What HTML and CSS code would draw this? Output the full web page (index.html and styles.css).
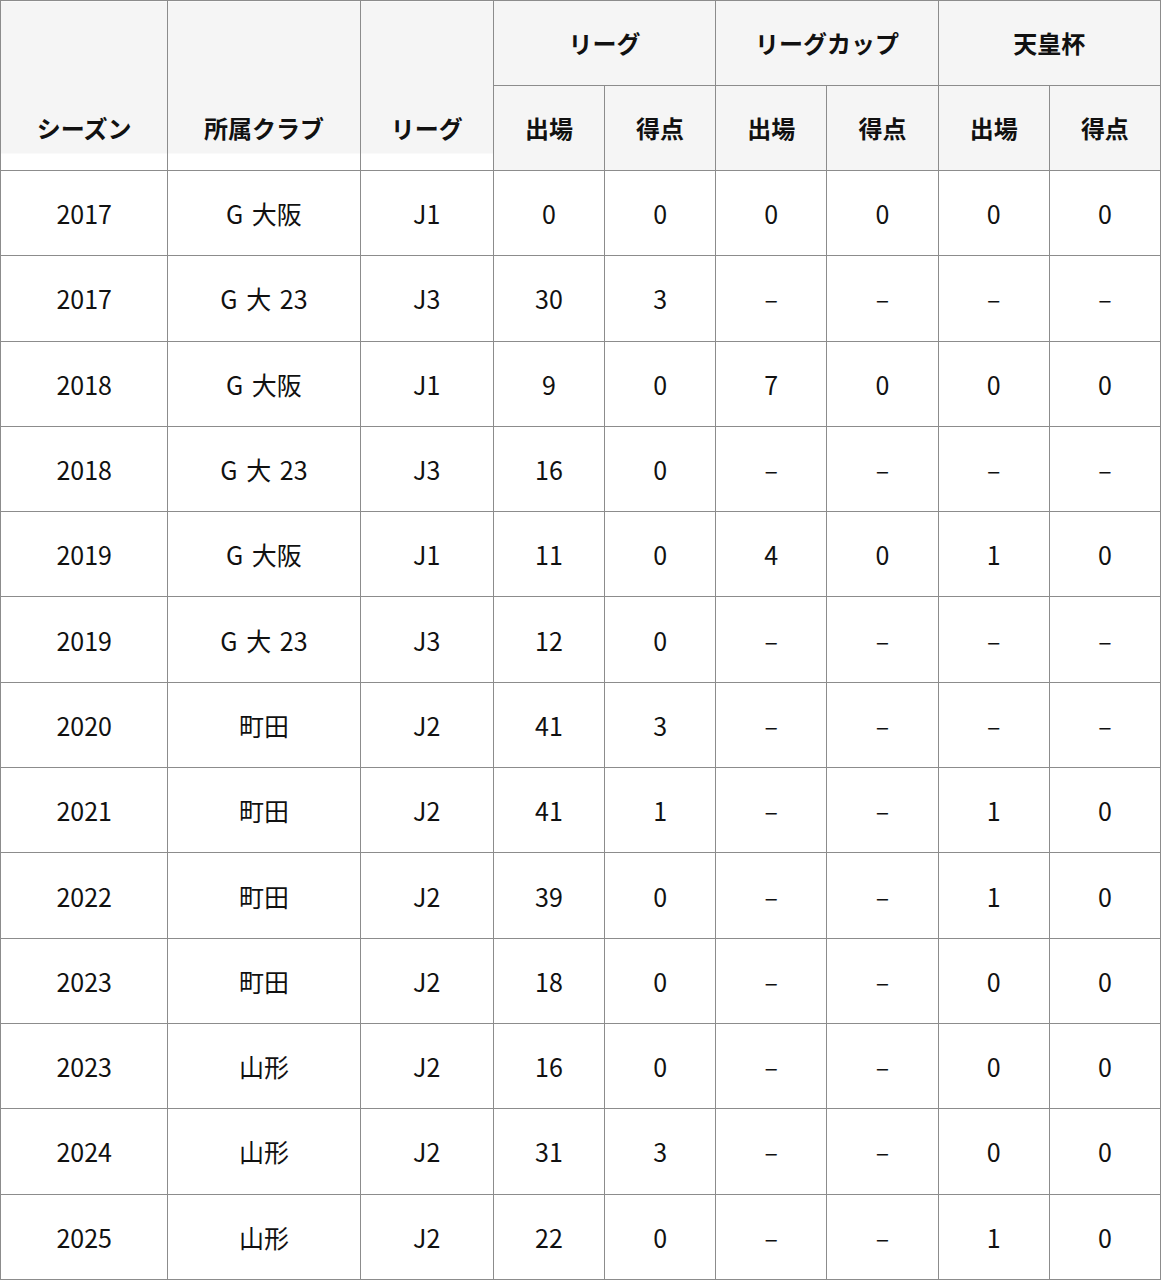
FILE: index.html
```html
<!DOCTYPE html>
<html lang="ja">
<head>
<meta charset="utf-8">
<link rel="stylesheet" href="styles.css">
</head>
<body>
<table class="stats">
<colgroup>
<col class="c-season"><col class="c-club"><col class="c-league">
<col class="c-n"><col class="c-n"><col class="c-n"><col class="c-n"><col class="c-n"><col class="c-n">
</colgroup>
<thead>
<tr class="h1">
<th rowspan="2" class="tall">シーズン</th>
<th rowspan="2" class="tall">所属クラブ</th>
<th rowspan="2" class="tall">リーグ</th>
<th colspan="2">リーグ</th>
<th colspan="2">リーグカップ</th>
<th colspan="2">天皇杯</th>
</tr>
<tr class="h2">
<th>出場</th><th>得点</th><th>出場</th><th>得点</th><th>出場</th><th>得点</th>
</tr>
</thead>
<tbody>
<tr><td>2017</td><td>G 大阪</td><td>J1</td><td>0</td><td>0</td><td>0</td><td>0</td><td>0</td><td>0</td></tr>
<tr><td>2017</td><td>G 大 23</td><td>J3</td><td>30</td><td>3</td><td>–</td><td>–</td><td>–</td><td>–</td></tr>
<tr><td>2018</td><td>G 大阪</td><td>J1</td><td>9</td><td>0</td><td>7</td><td>0</td><td>0</td><td>0</td></tr>
<tr><td>2018</td><td>G 大 23</td><td>J3</td><td>16</td><td>0</td><td>–</td><td>–</td><td>–</td><td>–</td></tr>
<tr><td>2019</td><td>G 大阪</td><td>J1</td><td>11</td><td>0</td><td>4</td><td>0</td><td>1</td><td>0</td></tr>
<tr><td>2019</td><td>G 大 23</td><td>J3</td><td>12</td><td>0</td><td>–</td><td>–</td><td>–</td><td>–</td></tr>
<tr><td>2020</td><td>町田</td><td>J2</td><td>41</td><td>3</td><td>–</td><td>–</td><td>–</td><td>–</td></tr>
<tr><td>2021</td><td>町田</td><td>J2</td><td>41</td><td>1</td><td>–</td><td>–</td><td>1</td><td>0</td></tr>
<tr><td>2022</td><td>町田</td><td>J2</td><td>39</td><td>0</td><td>–</td><td>–</td><td>1</td><td>0</td></tr>
<tr><td>2023</td><td>町田</td><td>J2</td><td>18</td><td>0</td><td>–</td><td>–</td><td>0</td><td>0</td></tr>
<tr><td>2023</td><td>山形</td><td>J2</td><td>16</td><td>0</td><td>–</td><td>–</td><td>0</td><td>0</td></tr>
<tr><td>2024</td><td>山形</td><td>J2</td><td>31</td><td>3</td><td>–</td><td>–</td><td>0</td><td>0</td></tr>
<tr><td>2025</td><td>山形</td><td>J2</td><td>22</td><td>0</td><td>–</td><td>–</td><td>1</td><td>0</td></tr>
</tbody>
</table>
</body>
</html>
```
FILE: styles.css
```css
html, body {
  margin: 0;
  padding: 0;
  background: #fff;
}
.stats {
  width: 1161px;
  height: 1280px;
  border-collapse: collapse;
  table-layout: fixed;
  font-family: "Noto Sans CJK JP", "Liberation Sans", sans-serif;
  color: #111;
}
.c-season { width: 167px; }
.c-club { width: 192px; }
.c-league { width: 133px; }
.c-n { width: 111px; }
.stats th,
.stats td {
  border: 1px solid #8c8c8c;
  text-align: center;
  vertical-align: middle;
  padding: 0;
  height: 84px;
  line-height: 30px;
}
.stats th {
  background: #f5f5f5;
  font-weight: 700;
  font-size: 24px;
}
.stats th.tall {
  vertical-align: bottom;
  padding-bottom: 27px;
  background: linear-gradient(to bottom, #f5f5f5 0, #f5f5f5 152px, #fff 152px);
}
.stats td {
  font-size: 25px;
  font-weight: 400;
  word-spacing: 3px;
}
```
